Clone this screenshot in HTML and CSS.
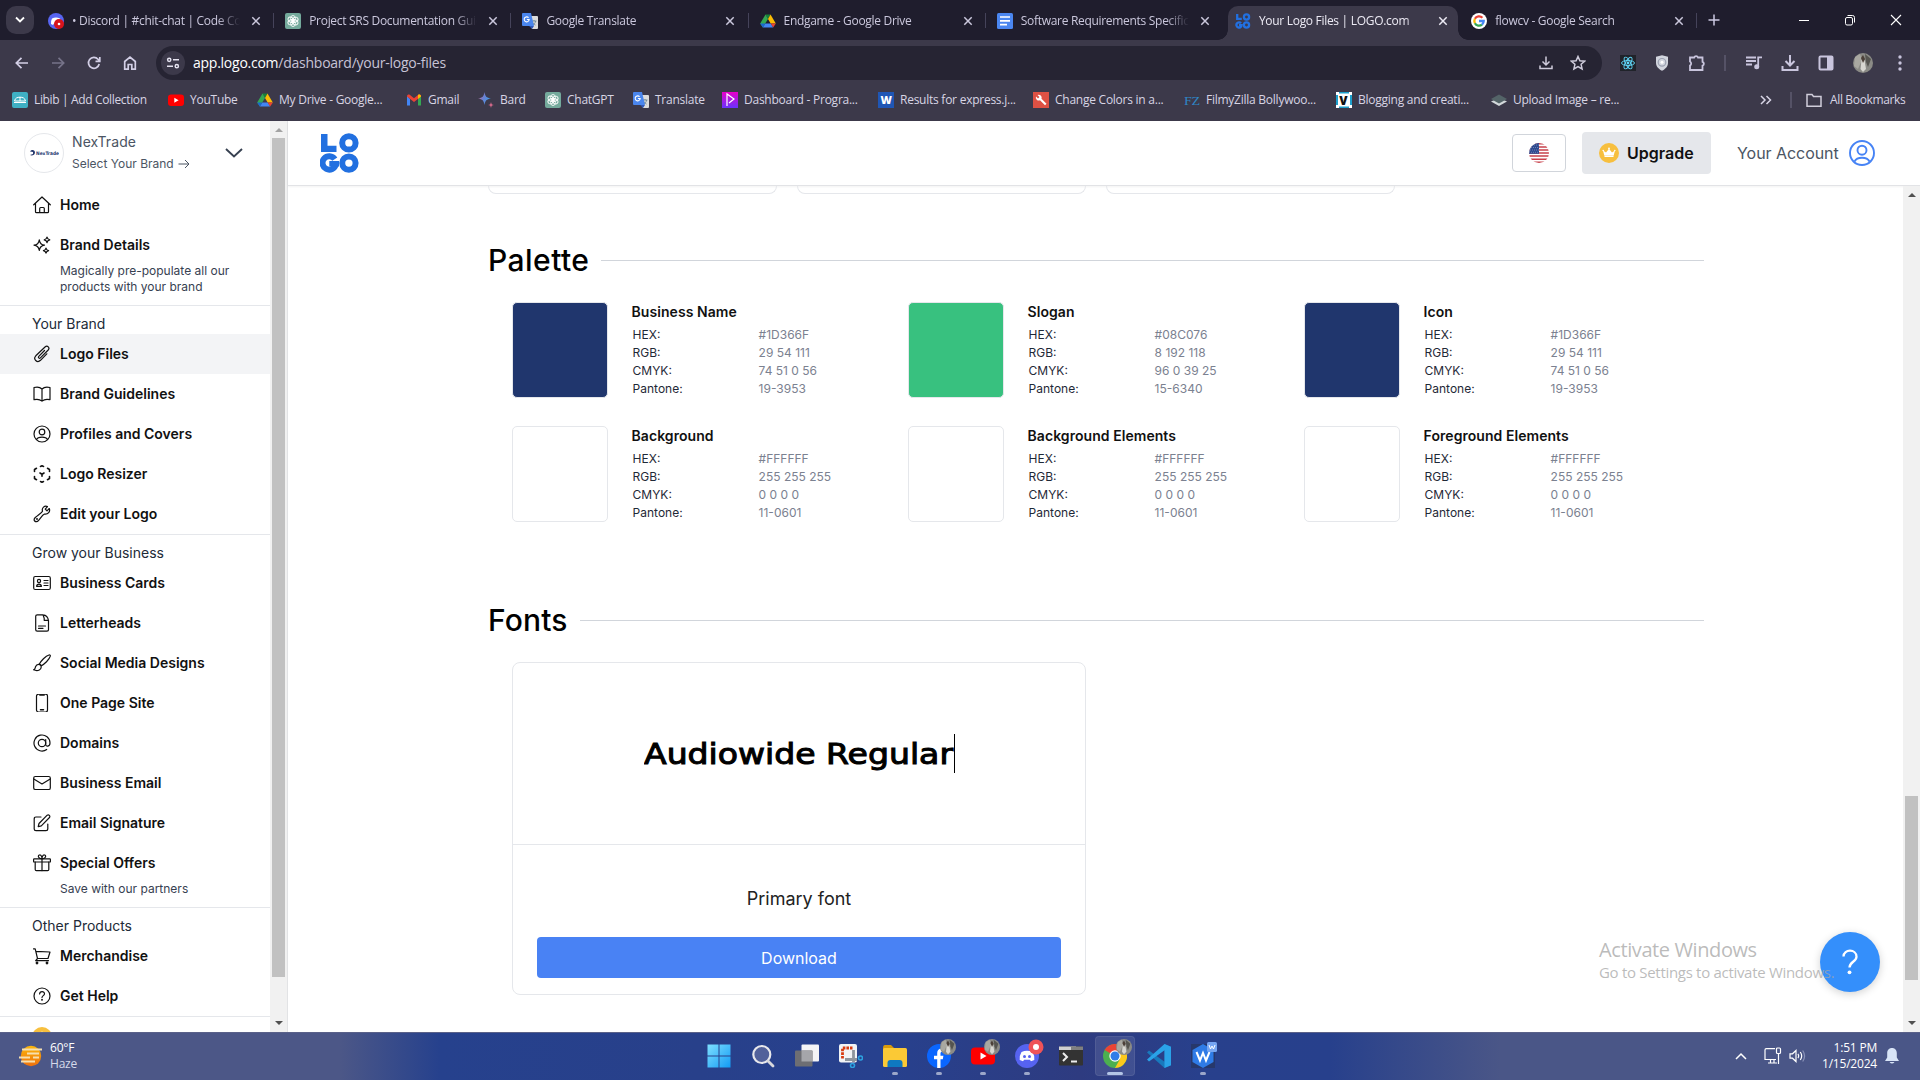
FILE: index.html
```html
<!DOCTYPE html>
<html lang="en">
<head>
<meta charset="utf-8">
<title>Your Logo Files | LOGO.com</title>
<link rel="stylesheet" href="styles.css">
</head>
<body>
<svg class="defs" width="0" height="0" aria-hidden="true">
  <symbol id="gpt" viewBox="0 0 16 16"><rect width="16" height="16" rx="2" fill="#74aa9c"/><g fill="none" stroke="#fff" stroke-width=".9"><ellipse cx="8" cy="5.6" rx="2.4" ry="3.1"/><ellipse cx="8" cy="5.6" rx="2.4" ry="3.1" transform="rotate(60 8 8)"/><ellipse cx="8" cy="5.6" rx="2.4" ry="3.1" transform="rotate(120 8 8)"/><ellipse cx="8" cy="5.6" rx="2.4" ry="3.1" transform="rotate(180 8 8)"/><ellipse cx="8" cy="5.6" rx="2.4" ry="3.1" transform="rotate(240 8 8)"/><ellipse cx="8" cy="5.6" rx="2.4" ry="3.1" transform="rotate(300 8 8)"/></g></symbol>
  <symbol id="translate" viewBox="0 0 16 16"><path d="M6 3h9a1 1 0 0 1 1 1v11a1 1 0 0 1-1 1h-5z" fill="#dcdcdc"/><path d="M9.500 8h5M12 7v1M10.500 12c2-.8 2.800-2 3-4M10.500 9c.5 1.500 1.500 2.500 3 3" stroke="#607d8b" stroke-width=".8" fill="none"/><path d="M1 0h8l3 13H1a1 1 0 0 1-1-1V1a1 1 0 0 1 1-1z" fill="#4a86ee"/><path d="M7.200 13H12l-2 3z" fill="#3159b5"/><path d="M6.600 4.700A2.500 2.500 0 1 0 7.200 6.500H4.900" fill="none" stroke="#fff" stroke-width="1.100"/></symbol>
  <symbol id="drive" viewBox="0 0 16 16"><path d="M5.500 1.500h5L8 6z" fill="#188038"/><path d="M5.500 1.500 8 6 2.800 14.500 .2 10.500z" fill="#34a853"/><path d="M10.500 1.500 15.800 10.500h-5.100L8 6z" fill="#fbbc04"/><path d="M5.300 10.500h5.400l2.500 4H2.800z" fill="#4285f4"/><path d="M10.700 10.500h5.100l-2.600 4z" fill="#ea4335"/><path d="M.2 10.500h5.100l-2.500 4z" fill="#1967d2"/></symbol>
  <symbol id="close" viewBox="0 0 10 10"><path d="M1.300 1.300l7.400 7.400M8.700 1.300l-7.400 7.400" stroke="currentColor" stroke-width="1.500"/></symbol>
  <symbol id="photo" viewBox="0 0 20 20"><circle cx="10" cy="10" r="10" fill="#8b8b86"/><path d="M2 4 7 1l2 6-4 9-4-3z" fill="#a9a8a1"/><path d="M12 1l6 5-3 8-2-5z" fill="#55544f"/><path d="M8.500 7h3l1.500 9-3 3-2.500-3z" fill="#d8d7d1"/><path d="M8 5l2-3 2 4-2 4z" fill="#4b3f37"/></symbol>
  <symbol id="crown" viewBox="0 0 20 20"><circle cx="10" cy="10" r="10" fill="#f7bf3e"/><path d="M5.300 12.600 4 7.600l3 1.800 3-3.700 3 3.700 3-1.800-1.300 5z" fill="#fff"/><path d="M5.500 13.300h9" stroke="#fff" stroke-width="1.400"/><g fill="#fff"><circle cx="4.200" cy="7.500" r=".8"/><circle cx="10" cy="5.500" r=".9"/><circle cx="15.800" cy="7.500" r=".8"/></g></symbol>
</svg>

<div class="screen">
  <header class="tabstrip">
    <div class="tab-search"><svg width="10" height="8" viewBox="0 0 10 8"><path d="M1 1.500l4 4 4-4" fill="none" stroke="#fff" stroke-width="1.800"/></svg></div>
    <div class="tab"><svg class="fav" viewBox="0 0 16 16"><circle cx="8" cy="8" r="8" fill="#5865f2"/><path d="M4 5.500q4-2 8 0 1.500 3 1 5.500l-2 1-1-1.500H6L5 12l-2-1Q2.500 8.500 4 5.500z" fill="#fff"/><circle cx="11" cy="11" r="5" fill="#d8141c"/><circle cx="11" cy="11" r="1.300" fill="#fff"/></svg><span class="tab-title">• Discord | #chit-chat | Code Community</span><svg class="x"><use href="#close"/></svg></div>
    <div class="tab"><svg class="fav"><use href="#gpt"/></svg><span class="tab-title">Project SRS Documentation Guide</span><svg class="x"><use href="#close"/></svg></div>
    <div class="tab"><svg class="fav"><use href="#translate"/></svg><span class="tab-title">Google Translate</span><svg class="x"><use href="#close"/></svg></div>
    <div class="tab"><svg class="fav"><use href="#drive"/></svg><span class="tab-title">Endgame - Google Drive</span><svg class="x"><use href="#close"/></svg></div>
    <div class="tab before-active"><svg class="fav" viewBox="0 0 16 16"><rect width="16" height="16" rx="1.500" fill="#4a86f0"/><path d="M3 4h10M3 7.800h10M3 11.600h7" stroke="#fff" stroke-width="1.700"/></svg><span class="tab-title">Software Requirements Specification</span><svg class="x"><use href="#close"/></svg></div>
    <div class="tab active"><svg class="fav" viewBox="0 0 16 16" fill="none" stroke="#2270e0" stroke-width="2.300"><path d="M2.200 1v4.900h4.600"/><circle cx="11.500" cy="4" r="2.600"/><circle cx="11.500" cy="12" r="2.600"/><path d="M6 10.300A2.600 2.600 0 1 0 6.600 12.200H4"/></svg><span class="tab-title">Your Logo Files | LOGO.com</span><svg class="x"><use href="#close"/></svg></div>
    <div class="tab"><svg class="fav" viewBox="0 0 16 16"><circle cx="8" cy="8" r="8" fill="#fff"/><g fill="none" stroke-width="2.300"><path d="M11.400 4.700A4.700 4.700 0 0 0 3.900 5.800" stroke="#ea4335"/><path d="M3.900 5.800a4.700 4.700 0 0 0 0 4.400" stroke="#fbbc04"/><path d="M3.900 10.200a4.700 4.700 0 0 0 7.100 1.400" stroke="#34a853"/><path d="M11 11.600A4.700 4.700 0 0 0 12.700 8H8" stroke="#4285f4"/></g></svg><span class="tab-title">flowcv - Google Search</span><svg class="x"><use href="#close"/></svg></div>
    <div class="new-tab"><svg width="12" height="12" viewBox="0 0 12 12"><path d="M6 .5v11M.5 6h11" stroke="#cdc9e2" stroke-width="1.500"/></svg></div>
    <div class="window-controls">
      <svg viewBox="0 0 12 12"><path d="M1 6.500h10" stroke="#fff"/></svg>
      <svg viewBox="0 0 12 12"><rect x="1.500" y="3.500" width="7" height="7.500" rx="1.500" fill="none" stroke="#fff"/><path d="M3.500 1.500h5a2 2 0 0 1 2 2v5" fill="none" stroke="#fff"/></svg>
      <svg viewBox="0 0 12 12"><path d="M1 1l10 10M11 1 1 11" stroke="#fff" stroke-width="1.100"/></svg>
    </div>
  </header>

  <div class="toolbar">
    <div class="nav-buttons">
      <svg viewBox="0 0 16 16"><path d="M14 8H2.500M7.500 2.800 2.300 8l5.200 5.200"/></svg>
      <svg class="dim" viewBox="0 0 16 16"><path d="M2 8h11.500M8.500 2.800 13.700 8l-5.200 5.200"/></svg>
      <svg viewBox="0 0 16 16"><path d="M13.200 9A5.400 5.400 0 1 1 12 4.300L13.500 6M13.800 2v4.300H9.500"/></svg>
      <svg viewBox="0 0 16 16"><path d="M2.700 14.200V6.500L8 2l5.300 4.500v7.700H9.800V9.500H6.200v4.700z"/></svg>
    </div>
    <div class="omnibox">
      <span class="site-info"><svg width="14" height="14" viewBox="0 0 14 14" fill="none" stroke="#e5e3f0" stroke-width="1.500"><circle cx="3.200" cy="3.800" r="1.600"/><path d="M7 3.800h6M1 10.200h6"/><circle cx="10.800" cy="10.200" r="1.600"/></svg></span>
      <span class="url"><b>app.logo.com</b>/dashboard/your-logo-files</span>
      <svg class="omni-icon" viewBox="0 0 16 16"><path d="M8 1.500v8M4.500 6.500 8 10l3.500-3.500M2 10.500v3h12v-3"/></svg>
      <svg class="omni-icon star" viewBox="0 0 16 16"><path d="M8 1.500l1.900 4.300 4.700.4-3.500 3.100 1 4.600L8 11.500l-4.100 2.400 1-4.600L1.400 6.200l4.700-.4z"/></svg>
    </div>
    <div class="extensions">
      <svg viewBox="0 0 16 16"><rect width="16" height="16" fill="#20232a" stroke="none"/><g fill="none" stroke="#61dafb" stroke-width=".9"><ellipse cx="8" cy="8" rx="6.500" ry="2.500"/><ellipse cx="8" cy="8" rx="6.500" ry="2.500" transform="rotate(60 8 8)"/><ellipse cx="8" cy="8" rx="6.500" ry="2.500" transform="rotate(120 8 8)"/></g><circle cx="8" cy="8" r="1.400" fill="#61dafb"/></svg>
      <svg viewBox="0 0 16 16"><path d="M8 .3l6 1.500v6c0 4-3 6.500-6 8-3-1.500-6-4-6-8v-6z" fill="#d2d5de"/><circle cx="8" cy="7.300" r="3.800" fill="none" stroke="#9aa0b0" stroke-width="1.200"/><circle cx="8" cy="7.300" r="1.500" fill="#fff"/></svg>
      <svg viewBox="0 0 18 18"><path d="M2 3.500h4.200a2 2 0 0 1 3.800 0h4.500v4.300a2 2 0 0 1 0 3.800v4.400H2v-4.500a2.300 2.300 0 0 0 0-4z" fill="none" stroke="#c9c5dd" stroke-width="1.800"/></svg>
      <i class="vsep"></i>
      <svg viewBox="0 0 18 18" fill="none" stroke="#c9c5dd" stroke-width="1.800"><path d="M1 3.500h10M1 7h10M1 10.500h6M13.200 13V3.300H17"/><circle cx="11.700" cy="12.800" r="1.600" fill="#c9c5dd"/></svg>
      <svg viewBox="0 0 18 18" fill="none" stroke="#c9c5dd" stroke-width="2"><path d="M9 1v10M4.500 7 9 11.500 13.500 7M1.500 12v4h15v-4"/></svg>
      <svg viewBox="0 0 18 18"><rect x="2.500" y="2.500" width="13" height="13" rx="1" fill="none" stroke="#c9c5dd" stroke-width="2"/><path d="M10 2.500h5.500v13H10z" fill="#c9c5dd"/></svg>
      <svg class="me"><use href="#photo"/></svg>
      <svg viewBox="0 0 18 18" fill="#c9c5dd"><circle cx="9" cy="3" r="1.700"/><circle cx="9" cy="9" r="1.700"/><circle cx="9" cy="15" r="1.700"/></svg>
    </div>
  </div>

  <nav class="bookmarks">
    <a><svg viewBox="0 0 16 16"><rect width="16" height="16" rx="2" fill="#3fb0c4"/><path d="M2.500 9c.5-3 3-3.800 5.500-3.800s5 .8 5.500 3.800zM8 5v4M2 10.500h12" fill="none" stroke="#fff"/></svg>Libib | Add Collection</a>
    <a><svg viewBox="0 0 16 16"><rect y="2.500" width="16" height="11.500" rx="3" fill="#f00"/><path d="M6.300 5.800v5l4.300-2.500z" fill="#fff"/></svg>YouTube</a>
    <a><svg><use href="#drive"/></svg>My Drive - Google...</a>
    <a><svg viewBox="0 0 16 16"><path d="M1 4v9.500h3V7z" fill="#4285f4"/><path d="M15 4v9.500h-3V7z" fill="#34a853"/><path d="M1 4.500C1 2.500 3 2 4 3l4 3.300L12 3c1-1 3-.5 3 1.500L8 10z" fill="#ea4335"/><path d="M12 3c1-1 3-.5 3 1.500L12 7z" fill="#fbbc04"/></svg>Gmail</a>
    <a><svg viewBox="0 0 16 16"><defs><linearGradient id="bard" x2="1" y2=".4"><stop stop-color="#d56a8b"/><stop offset=".5" stop-color="#6c7fd0"/><stop offset="1" stop-color="#3f9ce8"/></linearGradient></defs><path d="M6.500 0c.7 4.500 2 5.800 6.500 6.500-4.500.7-5.800 2-6.500 6.500C5.800 8.500 4.500 7.200 0 6.500 4.500 5.800 5.800 4.500 6.500 0z" fill="url(#bard)"/><path d="M13 10c.3 2 1 2.700 3 3-2 .3-2.700 1-3 3-.3-2-1-2.700-3-3 2-.3 2.700-1 3-3z" fill="#d56a8b"/></svg>Bard</a>
    <a><svg><use href="#gpt"/></svg>ChatGPT</a>
    <a><svg><use href="#translate"/></svg>Translate</a>
    <a><svg viewBox="0 0 16 16"><defs><linearGradient id="pg" x2="0" y2="1"><stop stop-color="#e800c8"/><stop offset="1" stop-color="#6a32ff"/></linearGradient></defs><rect width="16" height="16" fill="url(#pg)"/><path d="M5 14V2l7 5-5 4" fill="none" stroke="#fff" stroke-width="1.200"/></svg>Dashboard - Progra...</a>
    <a><svg viewBox="0 0 16 16"><rect width="16" height="16" fill="#1f56b5"/><text x="2.500" y="12" font-size="11" font-weight="800" fill="#fff" font-family="Open Sans, sans-serif">W</text></svg>Results for express.j...</a>
    <a><svg viewBox="0 0 16 16"><rect width="16" height="16" fill="#dd5144"/><path d="M3 4.500a3 3 0 0 0 4 3.800l5 5 1.500-1.500-5-5A3 3 0 0 0 4.500 3l2 2-1.500 1.500z" fill="#fff"/></svg>Change Colors in a...</a>
    <a><svg viewBox="0 0 16 16"><text x="0" y="13" font-size="13" textLength="16" lengthAdjust="spacingAndGlyphs" fill="#2f86c5" font-family="Liberation Serif, serif">FZ</text></svg>FilmyZilla Bollywoo...</a>
    <a><svg viewBox="0 0 16 16"><rect width="16" height="16" fill="#1d9fcc"/><rect x="2" y="1.500" width="12" height="13" fill="#fff"/><g fill="#fff"><rect width="3" height="3"/><rect x="13" width="3" height="3"/><rect y="13" width="3" height="3"/><rect x="13" y="13" width="3" height="3"/></g><text x="3.300" y="12.500" font-size="12" font-weight="800" fill="#111" font-family="Open Sans, sans-serif">V</text></svg>Blogging and creati...</a>
    <a><svg viewBox="0 0 16 16"><path d="M0 9.500 8 14l8-4.500L8 6z" fill="#d3d8db"/><path d="M0 7 8 11.500 16 7 8 2.500z" fill="#546468"/></svg>Upload Image – re...</a>
    <span class="more"><svg width="12" height="10" viewBox="0 0 12 10"><path d="M1 1l4 4-4 4M6.500 1l4 4-4 4" fill="none" stroke="#d8d5e6" stroke-width="1.500"/></svg><i class="vsep"></i></span>
    <a><svg viewBox="0 0 16 16"><path d="M1 2.500h5l1.500 2H15v9.700H1z" fill="none" stroke="#d0cdda" stroke-width="1.500"/></svg>All Bookmarks</a>
  </nav>

  <div class="page">
    <aside class="sidebar">
      <div class="menu">
        <div class="brand">
          <span class="avatar"><svg width="30" height="8" viewBox="0 0 30 8"><path d="M1 2.500C3 0 6 1 6 3.500S3 7 1 6l3-1V3z" fill="#25396f"/><text x="7" y="5.800" font-size="4.800" font-weight="700" fill="#25396f" textLength="23" lengthAdjust="spacingAndGlyphs" font-family="DejaVu Sans, sans-serif">NexTrade</text></svg></span>
          <span class="brand-text"><span class="brand-name">NexTrade</span><span class="brand-sub">Select Your Brand <svg width="12" height="10" viewBox="0 0 12 10"><path d="M.5 5h10.500M7 1l4 4-4 4" fill="none" stroke="#4b5563"/></svg></span></span>
          <svg class="chev" viewBox="0 0 18 10"><path d="M1 1l8 7.500L17 1" fill="none" stroke="#374151" stroke-width="1.900"/></svg>
        </div>
        <a class="item"><svg viewBox="0 0 18 18"><path d="M.7 8.800 9 1l8.300 7.800M2.500 7.500v8.200q0 1 1 1h11q1 0 1-1V7.500M6.700 16.500v-4q0-1 1-1h2.600q1 0 1 1v4"/></svg>Home</a>
        <a class="item"><svg viewBox="0 0 18 18"><path d="M6.300 3.800c.5 3.500 1.900 5 5.200 5.400-3.300.5-4.700 1.900-5.200 5.300C5.800 11.100 4.400 9.700 1 9.200c3.400-.4 4.800-1.900 5.300-5.400zM14 1c.3 1.800 1 2.500 2.800 2.800-1.800.3-2.500 1-2.800 2.800-.3-1.800-1-2.500-2.800-2.800C13 3.500 13.700 2.800 14 1zM13 12c.3 1.700 1 2.300 2.600 2.600-1.600.3-2.300 1-2.600 2.600-.3-1.600-1-2.300-2.600-2.600 1.600-.3 2.300-.9 2.600-2.600z"/></svg>Brand Details</a>
        <p class="note two">Magically pre-populate all our<br>products with your brand</p>
        <h4>Your Brand</h4>
        <a class="item current"><svg viewBox="0 0 18 18"><path d="M11.500 5.500 5.800 11.300c-1 1.100.4 2.700 1.600 1.600l7.800-7.900c2-2.200-.8-5.200-3.200-3L2.800 10.800c-3 3.200 1.300 7.800 4.700 4.500l6.300-6.500"/></svg>Logo Files</a>
        <a class="item"><svg viewBox="0 0 18 18"><path d="M9 4C6.800 1.800 3.500 1.800 1 2.500v12.200c2.600-.7 5.800-.5 8 1.400 2.200-1.900 5.400-2.100 8-1.400V2.500C14.500 1.800 11.200 1.800 9 4zM9 4v12"/></svg>Brand Guidelines</a>
        <a class="item"><svg viewBox="0 0 18 18"><circle cx="9" cy="9" r="8"/><circle cx="9" cy="7" r="2.800"/><path d="M3.500 14.500C5 11.200 13 11.200 14.500 14.500"/></svg>Profiles and Covers</a>
        <a class="item"><svg viewBox="0 0 18 18"><path d="M7.500 1.500 9 .8l1.500.7M3.500 3.300 1.500 4.500v2M14.500 3.300l2 1.200v2M1.500 11.500v2l2 1.200M16.500 11.500v2l-2 1.200M7.500 16.500l1.500.7 1.500-.7M7 8l2 1.200L11 8M9 9.200v2" stroke-width="1.600"/></svg>Logo Resizer</a>
        <a class="item"><svg viewBox="0 0 18 18"><path d="M16.300 3.500 14 5.800l-1.800-1.700L14.500 1.600c-3-1.300-6 1.200-5 4.600-.8 1.600-4.500 3.800-7.200 6.300-1.200 1.200-1.500 2.500-.6 3.500s2.600.9 3.700-.4c2.400-2.800 4-5.800 6.100-6.600 3.600.5 6-2.500 4.800-5.500z"/><circle cx="4" cy="14" r=".4"/></svg>Edit your Logo</a>
        <h4>Grow your Business</h4>
        <a class="item"><svg viewBox="0 0 18 18"><rect x=".7" y="2.500" width="16.600" height="13" rx="1.500"/><circle cx="6" cy="7" r="1.600"/><path d="M3.600 12.300c.3-3 4.500-3 4.800 0zM11 6.500h4M11 9h4M11 11.500h4"/></svg>Business Cards</a>
        <a class="item"><svg viewBox="0 0 18 18"><path d="M10 .8H4.200q-1.500 0-1.500 1.400v13.500q0 1.400 1.500 1.400h9.800q1.500 0 1.500-1.400V6.500C15 3.300 12.500 1 10 .8zM10 .8l1.200 3.500v2h4M5.500 12h7M5.500 14.300h4.500"/></svg>Letterheads</a>
        <a class="item"><svg viewBox="0 0 18 18"><path d="M6.200 10.200C8 7 12.500 2 16 1c1-.2 1.500.3 1.300 1.200-1 3.500-6 8-9.200 9.700zM6.200 10.200c1.200.1 1.900.8 1.900 1.900M8 12c1 3.500-3 5.700-7.500 3.800 1.700-.3 1.500-1.600 2-3 .6-1.600 2.100-2.500 3.800-2.300"/></svg>Social Media Designs</a>
        <a class="item"><svg viewBox="0 0 18 18"><rect x="3.500" y=".2" width="11" height="17.800" rx="2"/><path d="M6.800 1h4.400M7.500 15.800h3" stroke-width="1.500"/></svg>One Page Site</a>
        <a class="item"><svg viewBox="0 0 18 18"><circle cx="9" cy="9" r="3.700"/><path d="M12.700 5.500v4.800c0 3 4.300 2.300 4.300-1.300a8 8 0 1 0-3.300 6.500"/></svg>Domains</a>
        <a class="item"><svg viewBox="0 0 18 18"><rect x=".7" y="2.500" width="16.600" height="13" rx="1.600"/><path d="M.8 5 9 10l8.200-5"/></svg>Business Email</a>
        <a class="item"><svg viewBox="0 0 18 18"><path d="M8 3H3Q1.200 3 1.200 5v10q0 1.700 1.800 1.700h10q1.800 0 1.800-1.700v-5M5.200 12.700 6 9.500 14.200 1.200c1.600-1 3.300.8 2.300 2.300L8.300 11.800z"/></svg>Email Signature</a>
        <a class="item"><svg viewBox="0 0 18 18"><rect x=".6" y="4.800" width="16.800" height="3.200" rx=".6"/><path d="M2.200 8v7.500q0 1.200 1.200 1.200h11.200q1.200 0 1.200-1.200V8M9 4.800v12M9 4.800C5 5 4.500 1.300 6.500 1S9 3.500 9 4.800C9 3.500 9.500.7 11.500 1S13 5 9 4.800z"/></svg>Special Offers</a>
        <p class="note">Save with our partners</p>
        <h4>Other Products</h4>
        <a class="item"><svg viewBox="0 0 18 18"><path d="M.5 1.800h1.700l2.300 9.700-1.800 2.200H15.500M3 4.300l14 .7-2 6.500H4.500"/><circle cx="4" cy="16" r=".8" fill="#000"/><circle cx="14" cy="16" r=".8" fill="#000"/></svg>Merchandise</a>
        <a class="item"><svg viewBox="0 0 18 18"><circle cx="9" cy="9" r="8"/><path d="M6.600 7c.2-3.300 5-3 4.900-.2 0 1.700-2.500 2-2.500 3.700"/><circle cx="9" cy="12.800" r=".4"/></svg>Get Help</a>
        <div class="promo"><svg width="20" height="20"><use href="#crown"/></svg></div>
      </div>
      <div class="scrollbar left"><svg viewBox="0 0 8 4"><path d="M0 4l4-4 4 4z" fill="#a3a3a3"/></svg><i class="thumb"></i><svg viewBox="0 0 8 4"><path d="M0 0h8L4 4z" fill="#505050"/></svg></div>
    </aside>

    <section class="main">
      <header class="site-header">
        <svg class="site-logo" viewBox="0 0 40 40" aria-label="LOGO"><path d="M1 1h6.500v11.800h9V19H1z" fill="#2270e0"/><g fill="none" stroke="#2270e0" stroke-width="6"><circle cx="28.900" cy="9.900" r="6.700"/><circle cx="28.900" cy="30.100" r="6.700"/><path d="M14.800 26.200A6.700 6.700 0 1 0 15.800 31.300"/></g><path d="M9.300 28h9.700v5.500H9.300z" fill="#2270e0"/></svg>
        <span class="flag"><svg width="20" height="20" viewBox="0 0 20 20"><defs><clipPath id="round"><circle cx="10" cy="10" r="10"/></clipPath></defs><g clip-path="url(#round)"><rect width="20" height="20" fill="#fff"/><path d="M0 .8h20M0 3.900h20M0 7h20M0 10h20M0 13.100h20M0 16.200h20M0 19.200h20" stroke="#c8414b" stroke-width="1.500"/><rect width="10" height="10.800" fill="#2e4a8f"/><path d="M1 2h9M0 4.500h9M1 7h9M0 9.300h9" stroke="#b8c3de" stroke-width=".6" stroke-dasharray=".8 1.200"/></g></svg></span>
        <span class="upgrade"><svg width="20" height="20"><use href="#crown"/></svg>Upgrade</span>
        <span class="account">Your Account<svg width="26" height="26" viewBox="0 0 26 26" fill="none" stroke="#4683f5" stroke-width="1.900"><circle cx="13" cy="13" r="12"/><circle cx="13" cy="10.200" r="4.500"/><path d="M5.500 21.500c2.500-5 12.500-5 15 0"/></svg></span>
      </header>
      <div class="body">
        <div class="content">
          <div class="card-ends"><i></i><i></i><i></i></div>
          <h2 class="palette-title">Palette</h2>
          <div class="palette">
            <article><i class="swatch navy"></i><dl><dt class="name">Business Name</dt><dt>HEX:</dt><dd>#1D366F</dd><dt>RGB:</dt><dd>29 54 111</dd><dt>CMYK:</dt><dd>74 51 0 56</dd><dt>Pantone:</dt><dd>19-3953</dd></dl></article>
            <article><i class="swatch green"></i><dl><dt class="name">Slogan</dt><dt>HEX:</dt><dd>#08C076</dd><dt>RGB:</dt><dd>8 192 118</dd><dt>CMYK:</dt><dd>96 0 39 25</dd><dt>Pantone:</dt><dd>15-6340</dd></dl></article>
            <article><i class="swatch navy"></i><dl><dt class="name">Icon</dt><dt>HEX:</dt><dd>#1D366F</dd><dt>RGB:</dt><dd>29 54 111</dd><dt>CMYK:</dt><dd>74 51 0 56</dd><dt>Pantone:</dt><dd>19-3953</dd></dl></article>
            <article><i class="swatch"></i><dl><dt class="name">Background</dt><dt>HEX:</dt><dd>#FFFFFF</dd><dt>RGB:</dt><dd>255 255 255</dd><dt>CMYK:</dt><dd>0 0 0 0</dd><dt>Pantone:</dt><dd>11-0601</dd></dl></article>
            <article><i class="swatch"></i><dl><dt class="name">Background Elements</dt><dt>HEX:</dt><dd>#FFFFFF</dd><dt>RGB:</dt><dd>255 255 255</dd><dt>CMYK:</dt><dd>0 0 0 0</dd><dt>Pantone:</dt><dd>11-0601</dd></dl></article>
            <article><i class="swatch"></i><dl><dt class="name">Foreground Elements</dt><dt>HEX:</dt><dd>#FFFFFF</dd><dt>RGB:</dt><dd>255 255 255</dd><dt>CMYK:</dt><dd>0 0 0 0</dd><dt>Pantone:</dt><dd>11-0601</dd></dl></article>
          </div>
          <h2 class="fonts-title">Fonts</h2>
          <div class="font-card">
            <div class="sample"><svg width="311" height="39" viewBox="0 0 311 39"><text x="0" y="30" textLength="309" lengthAdjust="spacingAndGlyphs">Audiowide Regular</text><path d="M310.500 0v39" stroke="#000"/></svg></div>
            <div class="font-info"><p>Primary font</p><span class="download">Download</span></div>
          </div>
        </div>
        <div class="scrollbar right"><svg viewBox="0 0 8 4"><path d="M0 4l4-4 4 4z" fill="#505050"/></svg><i class="thumb"></i><svg viewBox="0 0 8 4"><path d="M0 0h8L4 4z" fill="#505050"/></svg></div>
      </div>
    </section>
  </div>

  <div class="help"><svg width="60" height="60" viewBox="0 0 60 60"><path d="M23.500 24.500c.2-8 13-7.500 13 .2 0 5-7 5.200-7 10.800" fill="none" stroke="#fff" stroke-width="2.300"/><circle cx="29.500" cy="40.300" r="1.900" fill="#fff"/></svg></div>
  <div class="watermark"><span class="wm-title">Activate Windows</span><span class="wm-sub">Go to Settings to activate Windows.</span></div>

  <footer class="taskbar">
    <div class="weather"><svg width="26" height="22" viewBox="0 0 26 22"><defs><linearGradient id="sun" x2="0" y2="1"><stop stop-color="#fbb70c"/><stop offset="1" stop-color="#ee6f0c"/></linearGradient></defs><circle cx="13" cy="11" r="10.200" fill="url(#sun)"/><path d="M4 4.500h20M9 8.500h12M1 12.500h11M15 12.500h6M3 16.500h14" stroke="#f6dfae" stroke-width="1.800"/></svg><span>60°F<br><em>Haze</em></span></div>
    <div class="apps">
      <span><svg viewBox="0 0 24 24"><defs><linearGradient id="win" x2="1" y2="1"><stop stop-color="#7fe0ff"/><stop offset="1" stop-color="#129bf5"/></linearGradient></defs><path d="M.5.500h11v11H.5zM12.500.500h11v11h-11zM.5 12.500h11v11H.5zM12.500 12.500h11v11h-11z" fill="url(#win)"/></svg></span>
      <span><svg viewBox="0 0 24 24"><circle cx="10.800" cy="10.500" r="8.500" fill="#52619b" stroke="#e8e8ec" stroke-width="2.200"/><path d="M17 17l5 5" stroke="#d8d8dc" stroke-width="2.800" stroke-linecap="round"/></svg></span>
      <span><svg viewBox="0 0 24 24"><rect x="6.500" y=".5" width="17.500" height="17" rx="1" fill="#f4f4f6"/><rect y="6.500" width="17.500" height="16" rx="1" fill="#6d6e73"/><rect x="6.500" y="6.500" width="11" height="11" fill="#a5a6aa"/></svg></span>
      <span><svg viewBox="0 0 24 24"><rect width="18" height="18.500" rx="2" fill="#f1f3f5"/><path d="M3.500 14.500V4h10" fill="none" stroke="#d83b10" stroke-width="2.800" stroke-dasharray="2.600 1"/><path d="M14.500 6v12M6 15.500h12" stroke="#8e959d" stroke-width="2.800"/><g fill="none" stroke="#2da2e0" stroke-width="1.600"><circle cx="13.500" cy="21.500" r="2"/><circle cx="21.500" cy="14" r="2"/></g></svg></span>
      <span><svg viewBox="0 0 24 24"><path d="M0 4q0-3 2-3h6l3 3v3H0z" fill="#d99a0b"/><rect y="4" width="24" height="19" rx="1.500" fill="#fbc935"/><path d="M4.500 23v-4q0-3 3-3h9q3 0 3 3v4z" fill="#0f79c0"/></svg><i></i></span>
      <span><svg viewBox="0 0 24 24"><circle cx="12" cy="12" r="12" fill="#0a66ff"/><path d="M10.200 24v-8.700H7v-3.500h3.200V9c0-3.300 2.500-5 6-4.300v3c-2-.2-2.700.2-2.700 1.800v2.300h2.900l-.6 3.500h-2.300V24z" fill="#fff"/></svg><svg class="badge"><use href="#photo"/></svg><i></i></span>
      <span><svg viewBox="0 0 24 24"><rect y="3.500" width="24" height="17" rx="4" fill="#f00"/><path d="M9.500 8.500v7l6-3.500z" fill="#fff"/></svg><svg class="badge"><use href="#photo"/></svg><i></i></span>
      <span><svg viewBox="0 0 24 24"><circle cx="12" cy="12" r="12" fill="#5663f0"/><path d="M6.500 8q5.500-2.500 11 0 2.500 4 1.800 8l-3.300 1.300-1.200-1.600H9.200L8 17.300 4.700 16Q4 12 6.500 8z" fill="#fff"/><g fill="#5663f0"><circle cx="9.500" cy="12.500" r="1.500"/><circle cx="14.500" cy="12.500" r="1.500"/></g></svg><svg class="badge" viewBox="0 0 16 16"><circle cx="8" cy="8" r="7.500" fill="#ef5358"/><circle cx="8" cy="8" r="3" fill="#fff"/></svg><i></i></span>
      <span><svg viewBox="0 0 24 24"><rect y="2.500" width="24" height="19" rx="1" fill="#333"/><path d="M0 2.500h17v3.500H0z" fill="#d0d0d0"/><path d="M12 2.500h12v3.500H12z" fill="#808080"/><path d="M4 9l4 4-4 4M12 17.500h6" fill="none" stroke="#eee" stroke-width="2"/></svg></span>
      <span class="running"><svg viewBox="0 0 24 24"><circle cx="12" cy="12" r="12" fill="#4caf50"/><path d="M12 12 1.600 6A12 12 0 0 1 22.400 6z" fill="#ea4335"/><path d="M12 12 22.400 6A12 12 0 0 1 12 24l5-9z" fill="#fdc91c"/><circle cx="12" cy="12" r="5.700" fill="#fff"/><circle cx="12" cy="12" r="4.500" fill="#2f7de8"/></svg><svg class="badge"><use href="#photo"/></svg><i></i></span>
      <span><svg viewBox="0 0 24 24"><path d="M17.500 0 24 2.800v18.400L17.500 24 0 8.500l2-2 15.500 11.200z" fill="#1879bd"/><path d="M17.500 0 24 2.800v18.400L17.500 24V6.300L2 17.500l-2-2z" fill="#2aa2e8"/></svg></span>
      <span><svg viewBox="0 0 24 24"><rect width="24" height="24" fill="#27386b"/><path d="M12 0l10.500 6v12L12 24 1.500 18V6z" fill="#2f7be6"/><path d="M5.500 8l3.500 8.500 3-7.500 3 7.500L18.500 8" fill="none" stroke="#fff" stroke-width="2"/></svg><svg class="badge small" viewBox="0 0 16 16"><rect x="3" y="3" width="10" height="10" rx="1.500" fill="#76a5f2"/><path d="M5 6l1.500 4L8 7l1.500 3L11 6" fill="none" stroke="#fff"/></svg><i></i></span>
    </div>
    <div class="tray">
      <svg width="12" height="8" viewBox="0 0 12 8"><path d="M1 7l5-5 5 5" fill="none" stroke="#fff" stroke-width="1.500"/></svg>
      <svg class="net" width="18" height="18" viewBox="0 0 18 18" fill="none" stroke="#fff" stroke-width="1.200"><path d="M11 1.700H2.300Q1 1.700 1 3v9.500h11M4 16h9M6.500 12.500V16M10 12.500V16M14.500 7v10"/><rect x="12.500" y="1" width="4" height="5.500" rx="1"/></svg>
      <svg class="vol" width="17" height="14" viewBox="0 0 17 14" fill="none" stroke="#fff" stroke-width="1.200"><path d="M1 4.800h2.500L7 1.500v11L3.500 9.200H1zM9 4.800q1.500 2.200 0 4.400M11.300 3q2.800 4 0 8"/><path d="M13.700 1.500q3.800 5.500 0 11" stroke="#8992b8"/></svg>
      <span class="clock">1:51 PM<br>1/15/2024</span>
      <svg width="14" height="16" viewBox="0 0 14 16"><path d="M7 0c3 0 4.800 2.200 4.800 5v4.500L14 13H0l2.200-3.500V5C2.200 2.200 4 0 7 0zM4.500 14h5q-2.500 3-5 0z" fill="#d8e4f6"/></svg>
    </div>
  </footer>
</div>
</body>
</html>
```
FILE: styles.css
```css
* { box-sizing: border-box; }
body { margin: 0; overflow: hidden; }
h2, h4, p, dl, dd { margin: 0; }
svg { display: block; flex: none; }
em { font-style: normal; }
.defs { position: absolute; }

.screen {
  position: relative;
  width: 1920px;
  height: 1080px;
  display: flex;
  flex-direction: column;
  overflow: hidden;
  background: #fff;
  font-family: Inter, sans-serif;
}

/* browser tabs */
.tabstrip {
  height: 40px;
  flex: none;
  display: flex;
  align-items: center;
  padding-left: 6px;
  background: #1f1d2d;
  color: #cbc8dd;
  font: 12px "Open Sans", sans-serif;
  letter-spacing: -0.3px;
}
.tab-search {
  width: 28px;
  height: 28px;
  flex: none;
  margin-right: 4px;
  border-radius: 10px;
  background: #3c394a;
  display: flex;
  align-items: center;
  justify-content: center;
}
.tab {
  width: 237.200px;
  height: 34px;
  flex: none;
  align-self: flex-end;
  display: flex;
  align-items: center;
  padding: 0 14px 5px 10px;
  background: linear-gradient(#45435a, #45435a) right 1px top 7px / 1px 15px no-repeat;
}
.tab.before-active { background: none; }
.tab.active {
  position: relative;
  background: #3c394a;
  border-radius: 10px 10px 0 0;
  color: #eceaf4;
  margin: 0 3.200px 0 4px;
  width: 230px;
  padding: 0 7px 5px;
}
.tab.active::before,
.tab.active::after {
  content: "";
  position: absolute;
  bottom: 0;
  width: 10px;
  height: 10px;
}
.tab.active::before { left: -10px; background: radial-gradient(circle at 0 0, transparent 9.500px, #3c394a 10px); }
.tab.active::after { right: -10px; background: radial-gradient(circle at 100% 0, transparent 9.500px, #3c394a 10px); }
.fav { width: 16px; height: 16px; }
.tab-title {
  width: 170px;
  margin: 0 9px 0 8px;
  overflow: hidden;
  white-space: nowrap;
  -webkit-mask-image: linear-gradient(90deg, #000 145px, transparent 168px);
  mask-image: linear-gradient(90deg, #000 145px, transparent 168px);
}
.x { width: 10px; height: 10px; }
.new-tab { margin-left: 10px; margin-top: -1px; }
.window-controls { display: flex; gap: 34px; margin-left: 78px; }
.window-controls svg { width: 12px; height: 12px; }

/* address bar */
.toolbar {
  height: 44px;
  flex: none;
  display: flex;
  align-items: center;
  padding: 2px 11px 0 14px;
  background: #3c394a;
}
.nav-buttons { display: flex; gap: 20px; width: 142px; }
.nav-buttons svg { width: 16px; height: 16px; fill: none; stroke: #d3cfe6; stroke-width: 1.700; }
.nav-buttons .dim { stroke: #767389; }
.omnibox {
  width: 1446px;
  height: 34px;
  border-radius: 17px;
  background: #262433;
  display: flex;
  align-items: center;
  padding: 0 16px 0 5px;
}
.site-info {
  width: 24px;
  height: 24px;
  border-radius: 12px;
  background: #3c394a;
  display: flex;
  align-items: center;
  justify-content: center;
}
.url { flex: 1; margin: -1px 0 0 8px; color: #c6c3d6; font: 14px "Open Sans", sans-serif; letter-spacing: -0.250px; }
.url b { font-weight: 400; color: #fff; }
.omni-icon { width: 16px; height: 16px; fill: none; stroke: #cfccdc; stroke-width: 1.500; }
.omni-icon.star { margin-left: 16px; }
.extensions { display: flex; align-items: center; justify-content: space-between; width: 289px; margin-left: 18px; }
.extensions svg { width: 18px; height: 18px; }
.extensions svg:nth-child(-n+2) { width: 16px; height: 16px; }
.extensions .me { width: 20px; height: 20px; }
.vsep { width: 2px; height: 16px; background: #555266; }

.bookmarks {
  height: 37px;
  flex: none;
  display: grid;
  grid-template-columns: 156px 89px 149px 72px 67px 88px 89px 156px 155px 151px 152px 155px 269px 46px 1fr;
  align-items: center;
  padding: 0 0 6px 12px;
  background: #3c394a;
  color: #d8d5e4;
  font: 12px "Open Sans", sans-serif;
  letter-spacing: -0.25px;
  white-space: nowrap;
}
.bookmarks a { display: flex; align-items: center; gap: 6px; }
.bookmarks a svg { width: 16px; height: 16px; }
.bookmarks a:first-child { letter-spacing: -0.350px; }
.bookmarks a:last-child { gap: 8px; letter-spacing: -0.350px; }
.more { display: flex; align-items: center; gap: 18px; }

/* page */
.page { height: 911px; flex: none; display: flex; overflow: hidden; }
.sidebar { width: 288px; height: 911px; display: flex; overflow: hidden; border-right: 1px solid #e2e3e5; }
.menu { width: 270px; flex: none; }
.brand { height: 64px; display: flex; align-items: center; padding-left: 24px; }
.avatar {
  width: 40px;
  height: 40px;
  border: 1px solid #e5e7eb;
  border-radius: 50%;
  display: flex;
  align-items: center;
  justify-content: center;
}
.brand-text { width: 153px; margin-left: 8px; display: flex; flex-direction: column; color: #4b5563; }
.brand-name { font-size: 14px; line-height: 22px; letter-spacing: 0.100px; }
.brand-sub { display: flex; align-items: center; gap: 4px; font-size: 12px; line-height: 22px; }
.chev { width: 18px; height: 10px; }
.item {
  height: 40px;
  display: flex;
  align-items: center;
  gap: 9px;
  padding: 0 0 1px 33px;
  font-size: 14px;
  font-weight: 600;
  color: #111;
}
.item svg { width: 18px; height: 18px; fill: none; stroke: #111; stroke-width: 1.200; stroke-linejoin: round; stroke-linecap: round; }
.item.current { background: #f3f4f6; }
.note { height: 24px; margin: -2px 0 2px; padding-left: 60px; font-size: 12px; line-height: 16px; color: #374151; }
.note.two { height: 40px; }
.menu h4 {
  height: 29px;
  padding: 8px 0 0 32px;
  border-top: 1px solid #e5e7eb;
  font-size: 14px;
  line-height: 20px;
  font-weight: 400;
  color: #222b38;
}
.promo { height: 40px; border-top: 1px solid #e5e7eb; padding: 10px 0 0 32px; }

.scrollbar { width: 17px; flex: none; background: #f1f1f1; display: flex; flex-direction: column; align-items: center; justify-content: space-between; padding: 7px 0; }
.scrollbar svg { width: 8px; height: 4px; }
.thumb { width: 13px; background: #c1c1c1; }
.left .thumb { height: 839px; margin: 6px 0 auto; }
.right .thumb { height: 184px; margin: 599px 0 auto; }

.main { flex: 1; display: flex; flex-direction: column; }
.site-header {
  height: 65px;
  display: flex;
  align-items: center;
  padding: 0 45px 1px 32px;
  border-bottom: 1px solid #e2e3e6;
  box-shadow: 0 1px 2px rgba(0, 0, 0, .05);
}
.site-logo { width: 40px; height: 40px; margin-right: auto; }
.flag { width: 54px; height: 38px; border: 1px solid #d1d5db; border-radius: 4px; display: flex; align-items: center; justify-content: center; }
.upgrade {
  width: 129px;
  height: 42px;
  margin-left: 16px;
  padding-left: 17px;
  border-radius: 4px;
  background: #e5e7eb;
  display: flex;
  align-items: center;
  gap: 8px;
  font-size: 16px;
  font-weight: 600;
  color: #111;
}
.account { display: flex; align-items: center; justify-content: space-between; width: 138px; margin-left: 26px; font-size: 16px; letter-spacing: -0.050px; color: #4b5563; }
.body { height: 846px; display: flex; }
.content { width: 1615px; padding: 0 199px 0 200px; }
.card-ends { height: 8px; display: flex; gap: 20px; }
.card-ends i { width: 289px; border: 1px solid #e5e7eb; border-top: 0; border-radius: 0 0 8px 8px; }
h2 { height: 40px; display: flex; align-items: center; gap: 12px; font-size: 30px; font-weight: 500; color: #000; }
h2::after { content: ""; flex: 1; height: 1px; background: #d1d5db; }
.palette-title { margin-top: 46px; letter-spacing: 0.450px; }
.palette { display: grid; grid-template-columns: repeat(3, 396px); grid-auto-rows: 96px; row-gap: 28px; margin: 22px 0 0 24px; }
.palette article { display: flex; }
.swatch { width: 96px; height: 96px; border: 1px solid #e5e7eb; border-radius: 5px; }
.navy { background: #20366d; }
.green { background: #38c17f; }
.palette dl { display: grid; grid-template-columns: 126px 1fr; grid-template-rows: 24px repeat(4, 18px); margin-left: 24.600px; font-size: 12px; line-height: 18px; color: #1f2937; }
.palette .name { grid-column: 1 / 3; margin-left: -1px; font-size: 14px; line-height: 20px; font-weight: 600; letter-spacing: 0.050px; color: #111; }
.palette dd { color: #7b8190; }
.fonts-title { margin-top: 78px; letter-spacing: 0.150px; }
.font-card { width: 574px; height: 333px; margin: 22px 0 0 24px; border: 1px solid #e5e7eb; border-radius: 8px; }
.sample { height: 182px; border-bottom: 1px solid #e5e7eb; display: flex; align-items: center; justify-content: center; }
.sample text { font: 28px "DejaVu Sans", sans-serif; fill: #000; stroke: #000; stroke-width: 1px; }
.font-info { padding: 40px 24px 0; text-align: center; }
.font-info p { font-size: 18px; line-height: 28px; color: #222; }
.download { display: block; height: 41px; margin-top: 24px; border-radius: 4px; background: #4982f4; color: #fff; font-size: 16px; line-height: 42px; }

/* overlays above the page */
.help { position: absolute; left: 1820px; top: 932px; width: 60px; height: 60px; border-radius: 50%; background: #348ffb; box-shadow: 0 2px 8px rgba(0, 0, 0, .18); }
.watermark { position: absolute; left: 1599px; top: 936px; display: flex; flex-direction: column; color: rgba(165, 165, 165, .75); font-family: "Open Sans", sans-serif; white-space: nowrap; }
.wm-title { font-size: 20px; line-height: 27px; letter-spacing: -0.400px; }
.wm-sub { font-size: 15px; line-height: 18px; letter-spacing: -0.300px; }

/* taskbar */
.taskbar {
  height: 48px;
  flex: none;
  display: flex;
  align-items: center;
  padding-bottom: 1px;
  border-top: 1px solid #5a6189;
  background: linear-gradient(90deg, #4c5787 0, #4c5787 340px, #26418d 440px, #28408a 700px, #27418e 880px, #2e3b80 1080px, #28408c 1200px, #27408c 1330px, #4a5687 1500px, #4a5687 100%);
  color: #fff;
  font: 12px/16px "Open Sans", sans-serif;
  letter-spacing: -0.200px;
}
.weather { width: 679px; display: flex; align-items: center; gap: 6px; padding-left: 18px; }
.weather em { color: #d5daea; }
.apps { display: flex; gap: 4px; margin-left: 20px; }
.apps span { position: relative; width: 40px; height: 40px; display: flex; align-items: center; justify-content: center; border-radius: 4px; }
.apps svg { width: 24px; height: 24px; }
.apps .badge { position: absolute; top: 3px; right: 3px; width: 16px; height: 16px; }
.apps .running { background: rgba(255, 255, 255, .1); box-shadow: inset 0 0 0 1px rgba(255, 255, 255, .08); }
.apps i { position: absolute; left: 17px; bottom: 1px; width: 6px; height: 3px; border-radius: 2px; background: #9ca7ca; }
.apps .running i { left: 12px; width: 16px; background: #b3c5e6; }
.tray { display: flex; align-items: center; margin-left: 512px; }
.net { margin-left: 17px; }
.vol { margin-left: 7px; }
.clock { width: 71px; margin-right: 8px; text-align: right; }
```
